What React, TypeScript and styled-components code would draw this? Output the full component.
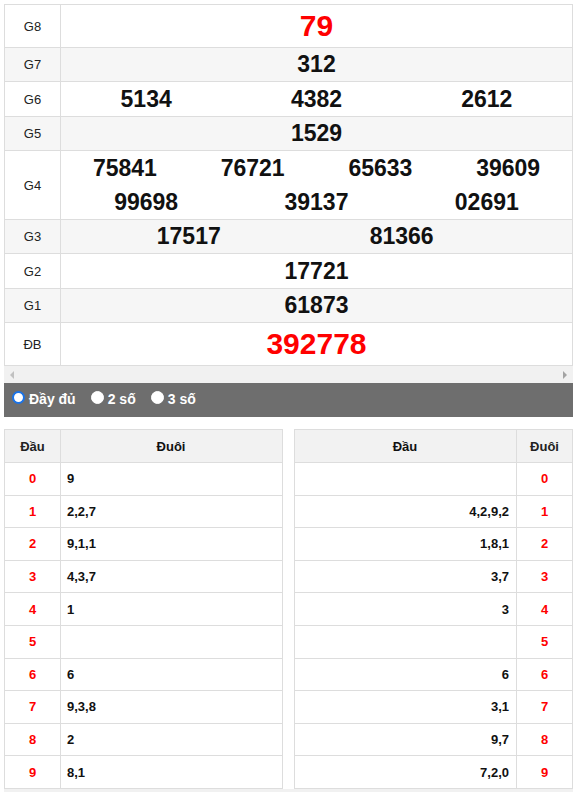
import React from "react";
import styled, { createGlobalStyle } from "styled-components";

const Global = createGlobalStyle`
  html, body { margin: 0; padding: 0; overflow: hidden; background: #fff; }
  body { font-family: "Liberation Sans", Arial, sans-serif; color: #222; }
`;

const Page = styled.div`
  width: 569px;
  margin: 4px 5px 0 4px;
`;

const Board = styled.div`
  border: 1px solid #ddd;
  border-bottom: none;
`;

const Row = styled.div<{ $alt?: boolean; $h: number }>`
  display: flex;
  height: ${(p) => p.$h}px;
  border-bottom: 1px solid #ddd;
  background: ${(p) => (p.$alt ? "#f6f6f6" : "#fff")};
`;

const Label = styled.div`
  width: 55px;
  flex: none;
  border-right: 1px solid #ddd;
  display: flex;
  align-items: center;
  justify-content: center;
  font-size: 13px;
  color: #222;
`;

const Content = styled.div`
  flex: 1;
  display: flex;
  flex-direction: column;
  justify-content: center;
`;

const Line = styled.div<{ $template: string }>`
  display: grid;
  grid-template-columns: ${(p) => p.$template};
  height: 34px;
  align-items: center;
`;

const Num = styled.div<{ $big?: boolean }>`
  text-align: center;
  font-weight: bold;
  font-size: ${(p) => (p.$big ? 30 : 23)}px;
  line-height: 1;
  color: ${(p) => (p.$big ? "#ff0000" : "#111")};
`;

const ScrollBar = styled.div`
  height: 17px;
  background: #f1f1f1;
  display: flex;
  align-items: center;
  justify-content: space-between;
  padding: 0 6px 0 6px;
  box-sizing: border-box;
`;

const Arrow = styled.span<{ $dir: "left" | "right" }>`
  width: 0;
  height: 0;
  border-top: 4px solid transparent;
  border-bottom: 4px solid transparent;
  ${(p) =>
    p.$dir === "left"
      ? "border-right: 4px solid #c1c1c1;"
      : "border-left: 4px solid #a3a3a3;"}
`;

const OptionBar = styled.div`
  height: 34px;
  background: #6e6e6e;
  display: flex;
  align-items: center;
  padding: 0 0 3px 8px;
  box-sizing: border-box;
  gap: 15px;
`;

const Option = styled.label`
  display: flex;
  align-items: center;
  gap: 4px;
  color: #fff;
  font-weight: bold;
  font-size: 14px;
`;

const Dot = styled.span<{ $checked?: boolean }>`
  width: 13px;
  height: 13px;
  box-sizing: border-box;
  border-radius: 50%;
  background: #fff;
  margin-top: -2px;
  border: ${(p) => (p.$checked ? "2px solid #1a73e8" : "1px solid #fff")};
`;

const Tables = styled.div`
  display: grid;
  grid-template-columns: 1fr 1fr;
  gap: 11px;
  margin-top: 12px;
`;

const Table = styled.div`
  border: 1px solid #ddd;
  border-bottom: none;
`;

const TRow = styled.div<{ $head?: boolean }>`
  display: flex;
  height: ${(p) => (p.$head ? 32 : 31.6)}px;
  border-bottom: 1px solid #ddd;
  background: ${(p) => (p.$head ? "#f2f2f2" : "#fff")};
  font-weight: bold;
  font-size: 13px;
`;

const KeyCell = styled.div<{ $side: "left" | "right"; $head?: boolean }>`
  width: 55px;
  flex: none;
  display: flex;
  align-items: center;
  justify-content: center;
  color: ${(p) => (p.$head ? "#222" : "#ff0000")};
  ${(p) =>
    p.$side === "left"
      ? "border-right: 1px solid #ddd;"
      : "border-left: 1px solid #ddd;"}
`;

const ValCell = styled.div<{ $align: "left" | "right" | "center" }>`
  flex: 1;
  display: flex;
  align-items: center;
  justify-content: ${(p) =>
    p.$align === "left" ? "flex-start" : p.$align === "right" ? "flex-end" : "center"};
  padding: 0 7px 0 6px;
  color: #111;
`;

const BottomBar = styled.div`
  height: 17px;
  background: #f1f1f1;
`;

type Prize = { label: string; lines: { nums: string[]; template: string }[]; big?: boolean; h: number };

const even = (n: number) => `repeat(${n}, 1fr)`;

const prizes: Prize[] = [
  { label: "G8", lines: [{ nums: ["79"], template: even(1) }], big: true, h: 42 },
  { label: "G7", lines: [{ nums: ["312"], template: even(1) }], h: 33 },
  { label: "G6", lines: [{ nums: ["5134", "4382", "2612"], template: even(3) }], h: 34 },
  { label: "G5", lines: [{ nums: ["1529"], template: even(1) }], h: 33 },
  {
    label: "G4",
    lines: [
      { nums: ["75841", "76721", "65633", "39609"], template: even(4) },
      { nums: ["99698", "39137", "02691"], template: even(3) },
    ],
    h: 68,
  },
  { label: "G3", lines: [{ nums: ["17517", "81366"], template: "3fr 2fr 1fr" }], h: 33 },
  { label: "G2", lines: [{ nums: ["17721"], template: even(1) }], h: 34 },
  { label: "G1", lines: [{ nums: ["61873"], template: even(1) }], h: 33 },
  { label: "ĐB", lines: [{ nums: ["392778"], template: even(1) }], big: true, h: 42 },
];

const dau = ["9", "2,2,7", "9,1,1", "4,3,7", "1", "", "6", "9,3,8", "2", "8,1"];
const duoi = ["", "4,2,9,2", "1,8,1", "3,7", "3", "", "6", "3,1", "9,7", "7,2,0"];

export default function App() {
  return (
    <>
      <Global />
      <Page>
        <Board>
          {prizes.map((p, i) => (
            <Row key={p.label} $alt={i % 2 === 1} $h={p.h}>
              <Label>{p.label}</Label>
              <Content>
                {p.lines.map((line, j) => (
                  <Line key={j} $template={line.template}>
                    {line.nums.map((n) => (
                      <Num key={n} $big={p.big}>
                        {n}
                      </Num>
                    ))}
                  </Line>
                ))}
              </Content>
            </Row>
          ))}
        </Board>
        <ScrollBar>
          <Arrow $dir="left" />
          <Arrow $dir="right" />
        </ScrollBar>
        <OptionBar>
          <Option>
            <Dot $checked />
            Đầy đủ
          </Option>
          <Option>
            <Dot />2 số
          </Option>
          <Option>
            <Dot />3 số
          </Option>
        </OptionBar>
        <Tables>
          <Table>
            <TRow $head>
              <KeyCell $side="left" $head>
                Đầu
              </KeyCell>
              <ValCell $align="center">Đuôi</ValCell>
            </TRow>
            {dau.map((v, i) => (
              <TRow key={i}>
                <KeyCell $side="left">{i}</KeyCell>
                <ValCell $align="left">{v}</ValCell>
              </TRow>
            ))}
          </Table>
          <Table>
            <TRow $head>
              <ValCell $align="center">Đầu</ValCell>
              <KeyCell $side="right" $head>
                Đuôi
              </KeyCell>
            </TRow>
            {duoi.map((v, i) => (
              <TRow key={i}>
                <ValCell $align="right">{v}</ValCell>
                <KeyCell $side="right">{i}</KeyCell>
              </TRow>
            ))}
          </Table>
        </Tables>
        <BottomBar />
      </Page>
    </>
  );
}
